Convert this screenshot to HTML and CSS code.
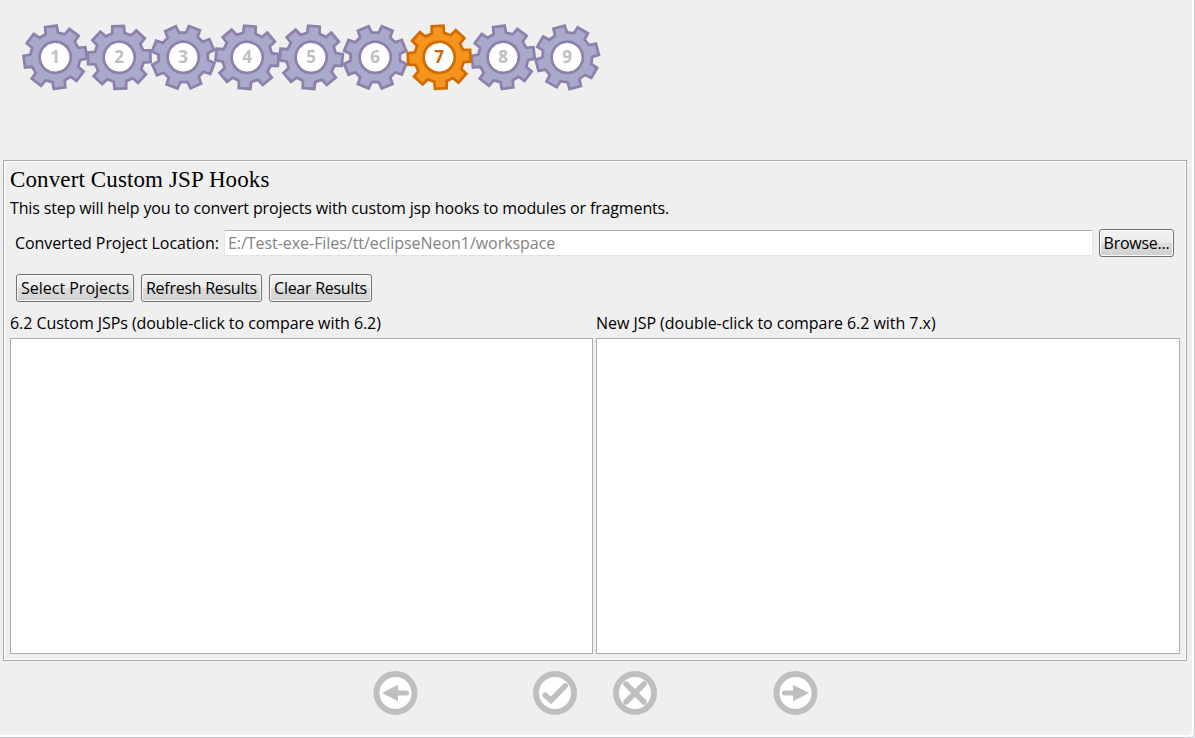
FILE: index.html
```html
<!DOCTYPE html>
<html lang="en">
<head>
<meta charset="utf-8">
<title>Convert Custom JSP Hooks</title>
<link rel="stylesheet" href="styles.css">
</head>
<body>
<svg class="defs" aria-hidden="true">
  <symbol id="gear" viewBox="-34 -34 68 68" overflow="visible">
    <path d="M-6.3-24.5L-5.9-31.7L5.9-31.7L6.3-24.5L12.9-21.8L18.2-26.6L26.6-18.2L21.8-12.9L24.5-6.3L31.7-5.9L31.7 5.9L24.5 6.3L21.8 12.9L26.6 18.2L18.2 26.6L12.9 21.8L6.3 24.5L5.9 31.7L-5.9 31.7L-6.3 24.5L-12.9 21.8L-18.2 26.6L-26.6 18.2L-21.8 12.9L-24.5 6.3L-31.7 5.9L-31.7-5.9L-24.5-6.3L-21.8-12.9L-26.6-18.2L-18.2-26.6L-12.9-21.8Z"/>
    <circle r="15.8"/>
  </symbol>
</svg>
<main class="window">
  <nav class="steps">
    <svg class="gears" viewBox="0 0 640 100">
      <g class="gear" transform="translate(55.2 57.3)"><use href="#gear" x="-34" y="-34" width="68" height="68" transform="rotate(-8) scale(.985)"/><text y="5.5">1</text></g>
      <g class="gear" transform="translate(119.2 57.3)"><use href="#gear" x="-34" y="-34" width="68" height="68" transform="rotate(-2) scale(.985)"/><text y="5.5">2</text></g>
      <g class="gear" transform="translate(183.2 57.3)"><use href="#gear" x="-34" y="-34" width="68" height="68" transform="rotate(-24) scale(.985)"/><text y="5.5">3</text></g>
      <g class="gear" transform="translate(247.2 57.3)"><use href="#gear" x="-34" y="-34" width="68" height="68" transform="rotate(5) scale(.985)"/><text y="5.5">4</text></g>
      <g class="gear" transform="translate(311.2 57.3)"><use href="#gear" x="-34" y="-34" width="68" height="68" transform="rotate(5) scale(.985)"/><text y="5.5">5</text></g>
      <g class="gear" transform="translate(375.2 57.3)"><use href="#gear" x="-34" y="-34" width="68" height="68" transform="rotate(22.5) scale(.985)"/><text y="5.5">6</text></g>
      <g class="gear" transform="translate(503.2 57.3)"><use href="#gear" x="-34" y="-34" width="68" height="68" transform="rotate(-8) scale(.985)"/><text y="5.5">8</text></g>
      <g class="gear" transform="translate(567.2 57.3)"><use href="#gear" x="-34" y="-34" width="68" height="68" transform="rotate(-15) scale(.985)"/><text y="5.5">9</text></g>
      <g class="gear current" transform="translate(439.2 57.3)"><use href="#gear" x="-34" y="-34" width="68" height="68" transform="rotate(-3) scale(.985)"/><text y="5.5">7</text></g>
    </svg>
  </nav>
  <section class="panel">
    <h1 class="title">Convert Custom JSP Hooks</h1>
    <p class="description">This step will help you to convert projects with custom jsp hooks to modules or fragments.</p>
    <div class="location">
      <label for="location">Converted Project Location:</label>
      <input class="field" id="location" type="text" value="E:/Test-exe-Files/tt/eclipseNeon1/workspace" readonly>
      <button class="btn browse">Browse...</button>
    </div>
    <div class="actions">
      <button class="btn select">Select Projects</button>
      <button class="btn refresh">Refresh Results</button>
      <button class="btn clear">Clear Results</button>
    </div>
    <div class="lists">
      <div class="list"><div class="caption">6.2 Custom JSPs (double-click to compare with 6.2)</div><div class="box"></div></div>
      <div class="list"><div class="caption">New JSP (double-click to compare 6.2 with 7.x)</div><div class="box"></div></div>
    </div>
  </section>
  <footer class="controls">
    <svg class="ctl" viewBox="-23.5 -23 46 46"><circle r="19"/><path class="head" d="M-13.5 0L2.5-8.2V8.2Z"/><path class="bar" d="M2 0H11"/></svg>
    <svg class="ctl check" viewBox="-23 -23 46 46"><circle r="19"/><path class="mark" d="M-9.8 2.2L-4 7.5L10.2-7.2"/></svg>
    <svg class="ctl cross" viewBox="-23 -23 46 46"><circle r="19"/><path class="mark" d="M-9-9L9 9M9-9L-9 9"/></svg>
    <svg class="ctl next" viewBox="-23.5 -23 46 46"><circle r="19"/><path class="head" d="M13.5 0L-2.5-8.2V8.2Z"/><path class="bar" d="M-2 0H-11"/></svg>
  </footer>
</main>
</body>
</html>
```
FILE: styles.css
```css
* { box-sizing: border-box; }
body { margin: 0; background: #e4e9f5; color: #000; font: 16px/20px "Open Sans", "Noto Sans", sans-serif; overflow: hidden; }
.defs { display: block; width: 0; height: 0; }
.window { display: flex; flex-direction: column; width: 1195px; height: 738px; background: #efefef; border-right: 1px solid #c9c9cd; border-bottom: 1px solid #c9c9cd; border-bottom-right-radius: 5px; box-shadow: inset -2px -2px #fff; }
.steps { height: 160px; }
.gears { display: block; width: 640px; height: 100px; }
.gear { fill: #a8a9cb; stroke: #8d81ab; stroke-width: 2.8; }
.gear text { fill: #bfbfbf; stroke: none; font-weight: 700; font-size: 17px; text-anchor: middle; }
.current { fill: #f7941d; stroke: #d06c00; }
.current text { fill: #d06400; }
.gear circle, symbol circle { fill: #fff; }
.panel { display: flex; flex-direction: column; width: 1184px; height: 501px; margin-left: 3px; padding: 6px; border: 1px solid #a9a9af; box-shadow: inset 0 0 0 1px #fff; }
.title { margin: 0; height: 26px; font: 400 23px/26px "Liberation Serif", serif; letter-spacing: 0.12px; }
.description { margin: 5px 0 0; height: 20px; line-height: 21px; letter-spacing: -0.137px; white-space: nowrap; }
.location { display: flex; align-items: center; gap: 5px; height: 28px; margin: 11px 6px 0 5px; }
.location label { width: 204px; letter-spacing: -0.08px; line-height: 21px; white-space: nowrap; }
.field { flex: 1; min-width: 0; height: 26px; padding: 0 3px; border: 1px solid #e2e3ea; border-top-color: #abadb3; border-radius: 2px; background: #fff; color: #838383; font: inherit; letter-spacing: -0.05px; }
.btn { height: 28px; padding: 0; border: 1px solid #707070; border-radius: 3px; box-shadow: inset 0 0 0 1px #fafafa; background: linear-gradient(#f2f2f2, #ebebeb 49%, #dddddd 50%, #cfcfcf); color: #000; font: inherit; white-space: nowrap; }
.browse { width: 75px; margin-left: 1px; letter-spacing: -0.25px; }
.actions { display: flex; gap: 7px; margin: 17px 6px 0; }
.select { width: 118px; }
.refresh { width: 121px; letter-spacing: -0.27px; }
.clear { width: 103px; letter-spacing: -0.27px; }
.lists { flex: 1; display: flex; gap: 3px; margin-top: 11px; }
.list { display: flex; flex-direction: column; width: 583px; }
.list + .list { width: 584px; }
.caption { height: 25px; letter-spacing: -0.065px; white-space: nowrap; }
.list + .list .caption { letter-spacing: -0.04px; }
.box { flex: 1; border: 1px solid #abadb3; background: #fff; }
.controls { display: flex; padding: 9px 0 0 372px; }
.ctl { width: 46px; height: 46px; fill: #fff; stroke: #bfbfbf; stroke-width: 6; }
.check { margin-left: 114px; }
.cross { margin-left: 34px; }
.next { margin-left: 114px; }
.head { fill: #bfbfbf; stroke: none; }
.bar { stroke-width: 5; stroke-linecap: round; }
.mark { fill: none; stroke-width: 5.5; stroke-linecap: round; }
```
